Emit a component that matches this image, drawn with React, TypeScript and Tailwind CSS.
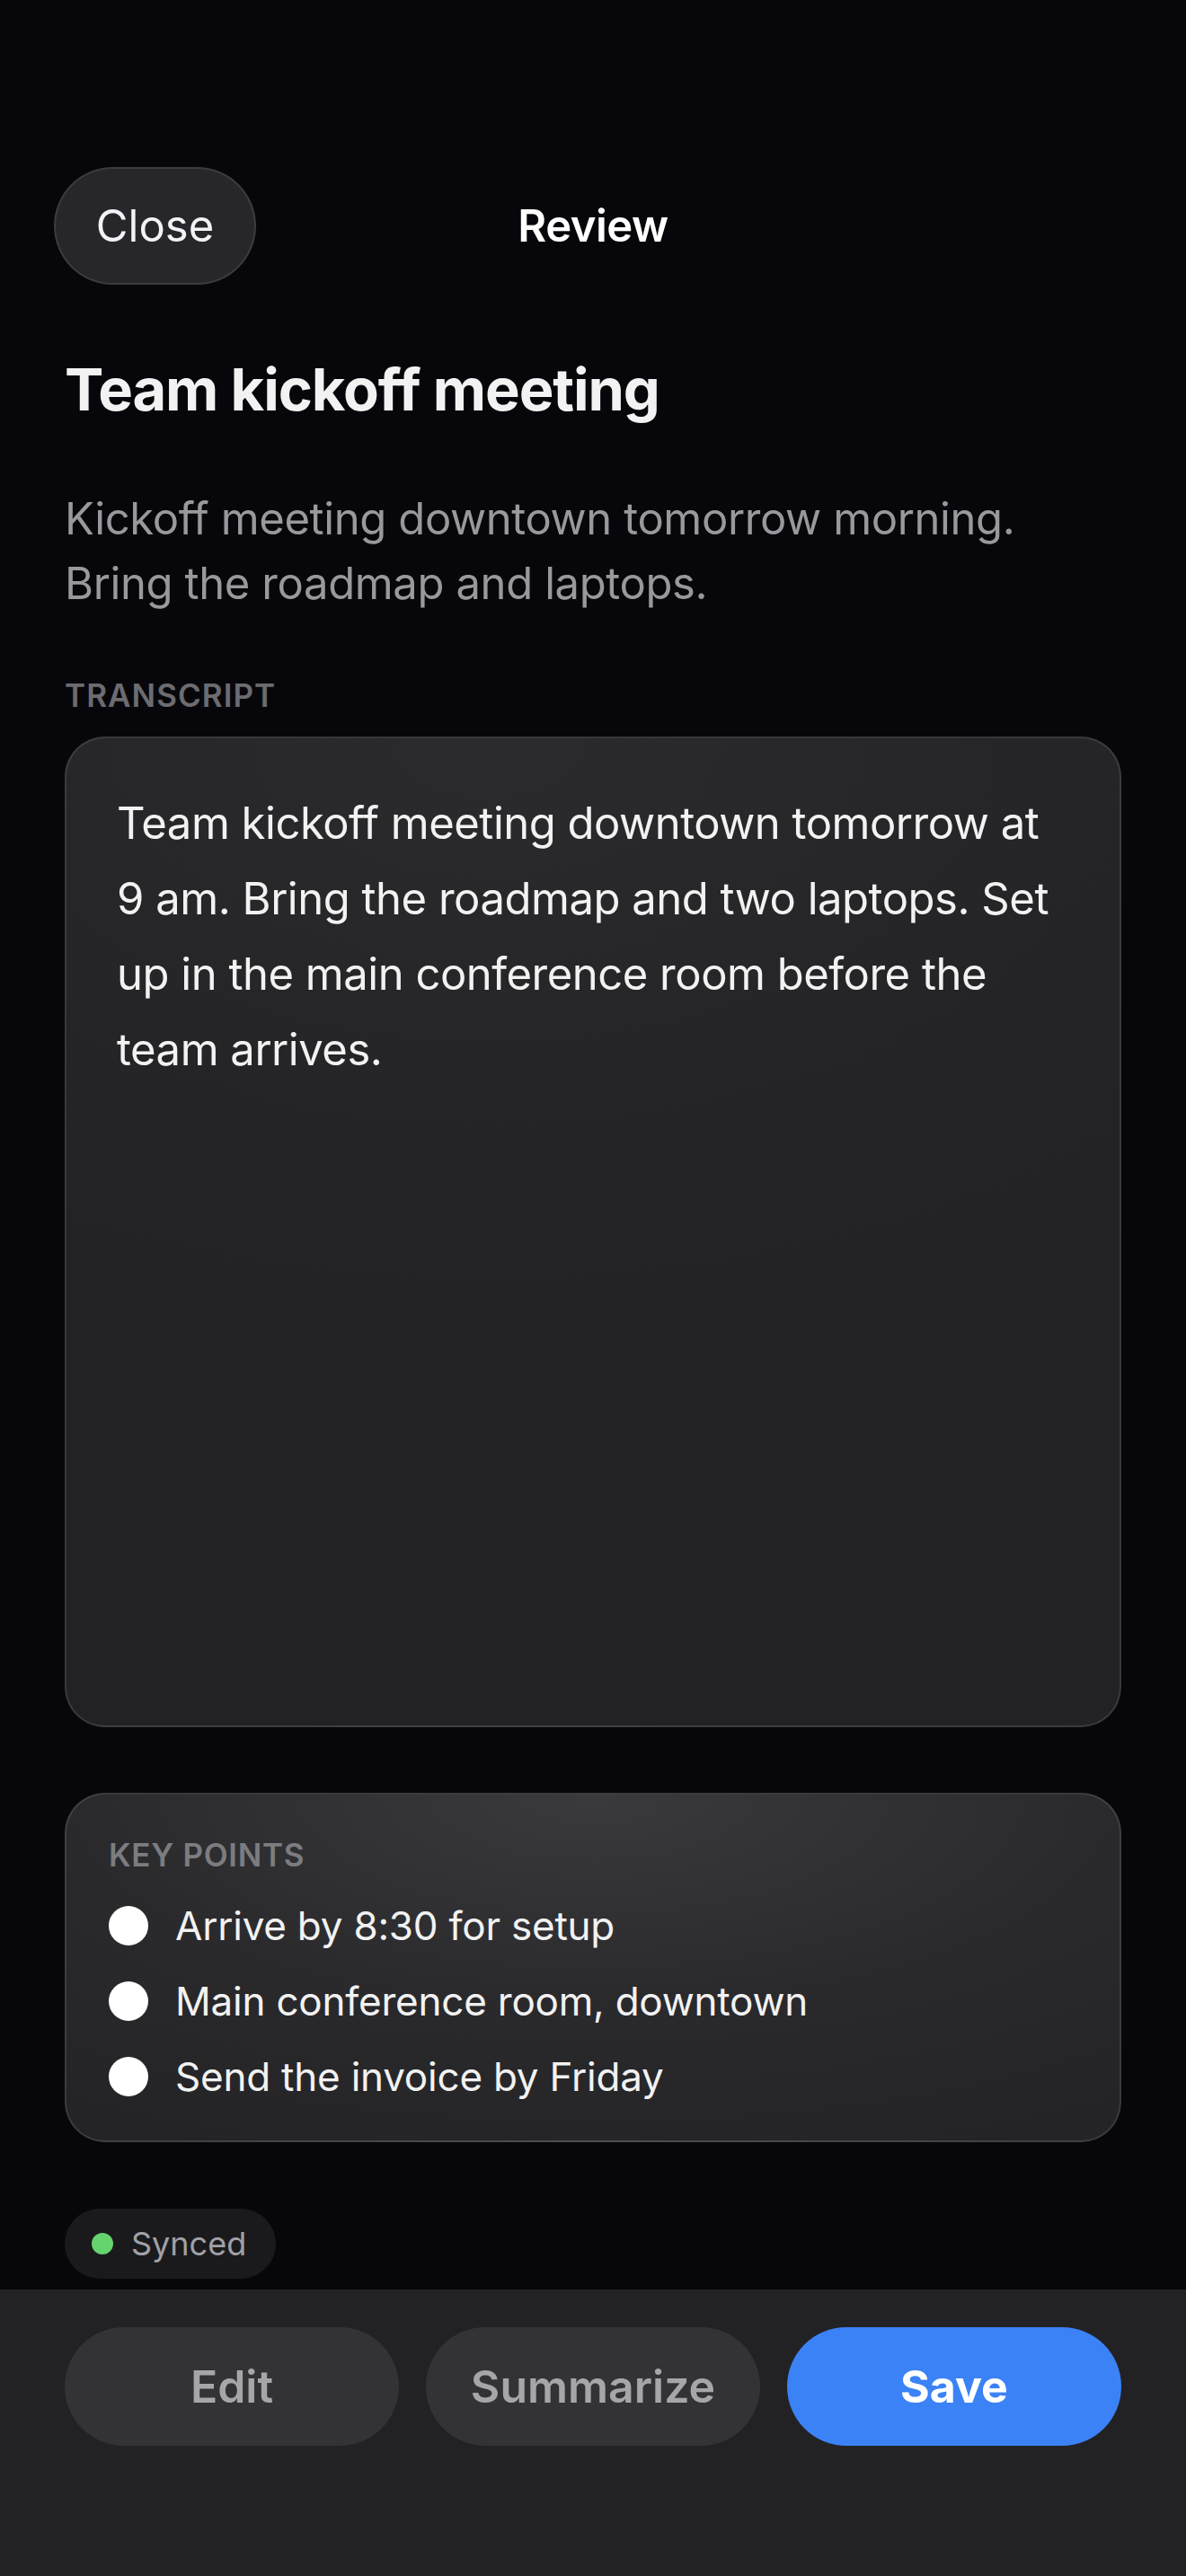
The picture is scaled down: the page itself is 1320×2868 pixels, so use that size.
import React from "react";

const KEY_POINTS = [
  "Arrive by 8:30 for setup",
  "Main conference room, downtown",
  "Send the invoice by Friday",
];

export default function App() {
  return (
    <div
      className="flex h-[2868px] w-full flex-col overflow-hidden bg-[#07070b] text-white"
      style={{ fontFamily: "Inter, 'Noto Sans', sans-serif" }}
    >
      <main className="flex flex-1 flex-col pt-[186px]">
        {/* header */}
        <header className="relative flex h-[131px] items-center px-[60px]">
          <button
            type="button"
            className="flex h-[131px] w-[225px] items-center justify-center rounded-full border-2 border-white/10 bg-[#26262b] text-[49px] text-[#f2f2f7]"
          >
            Close
          </button>
          <h1 className="absolute left-1/2 -translate-x-1/2 text-[49px] font-semibold tracking-[-0.01em]">Review</h1>
        </header>

        <section className="flex flex-col px-[72px]">
          <h2 className="mt-[77px] text-[65px] font-bold leading-[80px] tracking-[-0.017em] text-[#f2f2f2]">
            Team kickoff meeting
          </h2>

          <p className="mt-[68px] text-[49px] leading-[72px] tracking-[-0.008em] text-[#98989d]">
            Kickoff meeting downtown tomorrow morning.
            <br />
            Bring the roadmap and laptops.
          </p>

          <p className="mt-[66px] text-[35px] font-semibold uppercase leading-[44px] tracking-[0.03em] text-[#6c6c70]">
            Transcript
          </p>

          <div className="mt-[24px] h-[1103px] rounded-[45px] border-2 border-white/10 bg-[radial-gradient(110%_70%_at_40%_0%,#2b2b2e_0%,#242427_60%,#222225_100%)] pl-[56px] pr-[50px] pt-[53px]">
            <p className="text-[49px] leading-[84px] tracking-[-0.01em] text-[#f2f2f2]">
              Team kickoff meeting downtown tomorrow at 9 am. Bring the roadmap and two laptops. Set up in the main
              conference room before the team arrives.
            </p>
          </div>

          <div className="mt-[73px] rounded-[45px] border-2 border-white/10 bg-[radial-gradient(90%_110%_at_50%_0%,#3a3a3d_0%,#2a2a2d_55%,#242427_100%)] px-[47px] pb-[44px] pt-[45px]">
            <p className="text-[35px] font-semibold uppercase leading-[44px] tracking-[0.02em] text-[#7c7c80]">
              Key points
            </p>
            <ul className="mt-[30px] flex flex-col gap-[30px]">
              {KEY_POINTS.map((point) => (
                <li key={point} className="flex h-[54px] items-center gap-[30px]">
                  <span className="h-[44px] w-[44px] shrink-0 rounded-full bg-white" />
                  <span className="text-[44px] leading-[54px] tracking-[-0.005em] text-[#f2f2f2]">{point}</span>
                </li>
              ))}
            </ul>
          </div>

          <div className="mt-[74px] flex h-[78px] w-fit items-center gap-[20px] rounded-full bg-[#1a1a1d] pl-[30px] pr-[33px]">
            <span className="h-[24px] w-[24px] rounded-full bg-[#65d36e]" />
            <span className="text-[36px] text-[#a1a1a6]">Synced</span>
          </div>
        </section>
      </main>

      <footer className="h-[319px] shrink-0 bg-[#222224] px-[72px] pt-[42px]">
        <div className="grid grid-cols-3 gap-[30px]">
          <button type="button" className="h-[132px] rounded-full bg-[#333336] text-[50px] font-semibold text-[#a6a6aa]">
            Edit
          </button>
          <button type="button" className="h-[132px] rounded-full bg-[#333336] text-[50px] font-semibold text-[#a6a6aa]">
            Summarize
          </button>
          <button type="button" className="h-[132px] rounded-full bg-[#3b82f6] text-[50px] font-bold text-white">
            Save
          </button>
        </div>
      </footer>
    </div>
  );
}
